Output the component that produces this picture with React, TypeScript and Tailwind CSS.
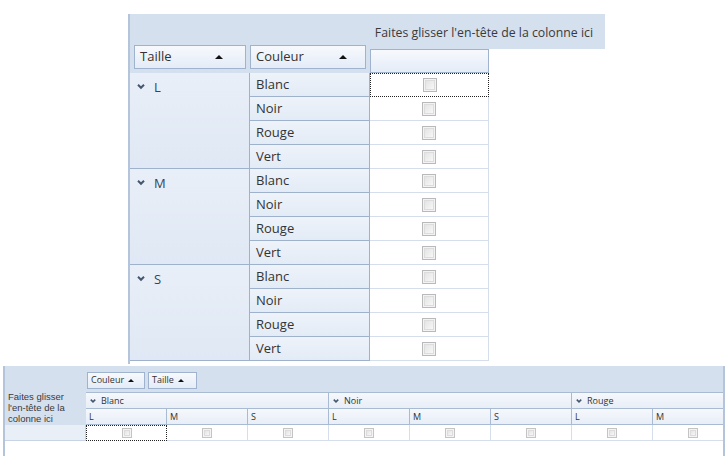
import React from "react"

const groups = ["L", "M", "S"]
const couleurs = ["Blanc", "Noir", "Rouge", "Vert"]

function Chevron({ size = 8 }: { size?: number }) {
  return (
    <svg width={size} height={size * 0.625} viewBox="0 0 8 5" className="shrink-0 overflow-visible">
      <polyline points="1,0.8 4,3.8 7,0.8" fill="none" stroke="#45566e" strokeWidth="2" />
    </svg>
  )
}

function SortUp({ w = 8 }: { w?: number }) {
  return (
    <svg width={w} height={w / 2} viewBox="0 0 8 4" className="shrink-0">
      <polygon points="0,4 4,0 8,4" fill="#111" />
    </svg>
  )
}

function Check({ small }: { small?: boolean }) {
  return (
    <div
      className={
        small
          ? "w-[10px] h-[10px] border border-[#c4c4c4] bg-[#f4f4f4] p-[1px]"
          : "w-[14px] h-[14px] border border-[#b9b9b9] bg-[#f3f3f3] p-[1px]"
      }
    >
      <div className="w-full h-full border border-[#dcdcdc] bg-gradient-to-br from-[#e4e4e4] to-[#f7f7f7]" />
    </div>
  )
}

export default function App() {
  return (
    <div className="w-[728px] h-[456px] bg-white overflow-hidden font-['Open_Sans','Noto_Sans',sans-serif] text-[#333]">
      {/* Grille du haut */}
      <div className="ml-[128px] mt-[14px] w-[477px] h-[350px] border-l-2 border-[#b4c4da] flex flex-col">
        <div className="flex h-[59px]">
          <div className="w-[240px] bg-[#d5e0ef] flex items-end gap-[4px] pl-[4px] pb-[4px]">
            <div className="w-[112px] h-[24px] border border-[#9fb3cf] bg-gradient-to-b from-[#f7f9fd] to-[#e4ecf7] flex items-center justify-between pl-[5px] pr-[22px] text-[13px]">
              <span>Taille</span>
              <SortUp />
            </div>
            <div className="w-[116px] h-[24px] border border-[#9fb3cf] bg-gradient-to-b from-[#f7f9fd] to-[#e4ecf7] flex items-center justify-between pl-[5px] pr-[18px] text-[13px]">
              <span>Couleur</span>
              <SortUp />
            </div>
          </div>
          <div className="w-[235px] flex flex-col">
            <div className="h-[35px] bg-[#d5e0ef] flex items-center justify-end pr-[12px] pt-[3px] text-[12.3px] text-[#3a3a3a]">
              Faites glisser l'en-tête de la colonne ici
            </div>
            <div className="w-[119px] h-[24px] border border-[#9fb3cf] bg-gradient-to-b from-[#f7f9fd] to-[#e4ecf7]" />
          </div>
        </div>
        {groups.map((g) => (
          <div key={g} className="flex">
            <div className="w-[120px] h-[96px] border-r border-b border-[#9fb2cc] bg-gradient-to-b from-[#e9eff8] to-[#dfe8f4] flex items-start gap-[9px] pl-[7px] pt-[5px] text-[13px] text-[#34445a]">
              <span className="mt-[6px]">
                <Chevron />
              </span>
              <span>{g}</span>
            </div>
            <div className="flex flex-col">
              {couleurs.map((c, i) => (
                <div key={c} className="flex h-[24px]">
                  <div className="w-[120px] h-full border-r border-b border-[#9fb2cc] bg-gradient-to-b from-[#eef3fa] to-[#e3ebf6] flex items-center pl-[6px] text-[13px]">
                    {c}
                  </div>
                  <div
                    className={
                      g === "L" && i === 0
                        ? "w-[119px] h-full border border-dotted border-[#222] bg-white flex items-center justify-center"
                        : "w-[119px] h-full border-r border-b border-[#d5dfec] bg-white flex items-center justify-center"
                    }
                  >
                    <Check />
                  </div>
                </div>
              ))}
            </div>
          </div>
        ))}
      </div>

      {/* Grille du bas */}
      <div className="ml-[3px] mt-[2px] w-[722px] h-[90px] border-l-2 border-r-2 border-[#b4c4da] flex flex-col text-[9px]">
        <div className="flex">
          <div className="w-[81px] h-[59px] bg-[#d5e0ef] flex flex-col justify-end pl-[3px] pb-[1px] leading-[11px] text-[9.5px] font-['Liberation_Sans',sans-serif] text-[#3a3a3a]">
            <span>Faites glisser</span>
            <span>l'en-tête de la</span>
            <span>colonne ici</span>
          </div>
          <div className="flex-1 flex flex-col overflow-hidden">
            <div className="h-[26px] bg-[#d5e0ef] flex items-center gap-[3px] pl-[1px] pt-[2px]">
              <div className="w-[58px] h-[17px] border border-[#9fb3cf] bg-gradient-to-b from-[#f7f9fd] to-[#e4ecf7] flex items-center gap-[4px] pl-[3px]">
                <span>Couleur</span>
                <SortUp w={6} />
              </div>
              <div className="w-[49px] h-[17px] border border-[#9fb3cf] bg-gradient-to-b from-[#f7f9fd] to-[#e4ecf7] flex items-center gap-[4px] pl-[3px]">
                <span>Taille</span>
                <SortUp w={6} />
              </div>
            </div>
            <div className="flex h-[16px]">
              {["Blanc", "Noir", "Rouge"].map((c) => (
                <div
                  key={c}
                  className="w-[243px] shrink-0 h-full border-t border-r border-[#a9bbd3] bg-gradient-to-b from-[#f5f8fc] to-[#e8eef7] flex items-center gap-[5px] pl-[4px]"
                >
                  <Chevron size={6} />
                  <span>{c}</span>
                </div>
              ))}
            </div>
            <div className="flex h-[17px]">
              {["L", "M", "S", "L", "M", "S", "L", "M"].map((t, i) => (
                <div
                  key={i}
                  className="w-[81px] shrink-0 h-full border-t border-r border-b border-[#a9bbd3] bg-gradient-to-b from-[#f5f8fc] to-[#e8eef7] flex items-center pl-[3px]"
                >
                  {t}
                </div>
              ))}
            </div>
          </div>
        </div>
        <div className="flex h-[16px]">
          <div className="w-[81px] shrink-0 h-full border-r border-b border-[#c7d4e5] bg-[#e9eff7]" />
          <div className="flex-1 flex overflow-hidden">
            {[0, 1, 2, 3, 4, 5, 6, 7].map((i) => (
              <div
                key={i}
                className={
                  i === 0
                    ? "w-[81px] shrink-0 h-full border border-dotted border-[#222] flex items-center justify-center"
                    : "w-[81px] shrink-0 h-full border-r border-b border-[#d5dfec] flex items-center justify-center"
                }
              >
                <Check small />
              </div>
            ))}
          </div>
        </div>
      </div>
    </div>
  )
}
